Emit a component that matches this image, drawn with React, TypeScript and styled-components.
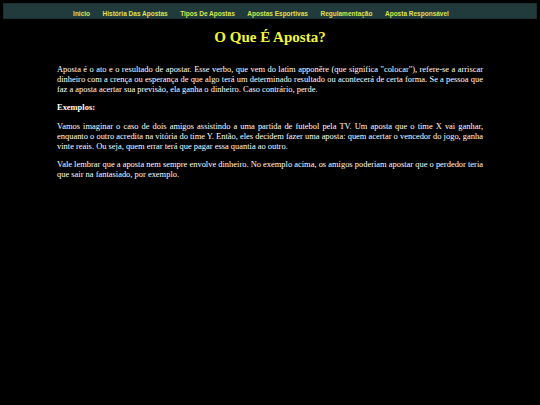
import styled, { createGlobalStyle } from 'styled-components';

const GlobalStyle = createGlobalStyle`
  html, body {
    margin: 0;
    padding: 0;
    background-color: #000;
  }
`;

const Page = styled.div`
  min-height: 405px;
  background-color: #000;
  color: #fff;
  padding-top: 3px;
`;

const Nav = styled.nav`
  margin: 0 3px;
  height: 16px;
  background-color: #213b3d;
  border: 1px solid #1a2e30;
  box-sizing: border-box;
  display: flex;
  align-items: center;
  justify-content: center;
  padding-right: 18px;
`;

const NavList = styled.ul`
  list-style: none;
  margin: 0;
  padding: 0;
  display: flex;
  gap: 12.5px;
`;

const NavLink = styled.a`
  font-family: 'Liberation Sans', Arial, sans-serif;
  font-size: 6.5px;
  font-weight: bold;
  color: #dde44b;
  text-decoration: none;
`;

const Main = styled.main`
  padding: 0 57px;
  font-family: 'Liberation Serif', 'Times New Roman', serif;
  font-size: 8.45px;
  line-height: normal;

  h1 {
    color: #f4f43a;
    font-size: 15px;
    font-weight: bold;
    text-align: center;
    margin: 9px 0 18px;
    line-height: 18px;
  }

  p {
    text-align: justify;
    margin: 1em 0;
  }

  h2 {
    font-size: 1em;
    font-weight: bold;
    margin: 1em 0;
  }
`;

const links = [
  'Inicio',
  'História Das Apostas',
  'Tipos De Apostas',
  'Apostas Esportivas',
  'Regulamentação',
  'Aposta Responsável',
];

export default function App() {
  return (
    <Page>
      <GlobalStyle />
      <Nav>
        <NavList>
          {links.map((l) => (
            <li key={l}>
              <NavLink href='#'>{l}</NavLink>
            </li>
          ))}
        </NavList>
      </Nav>

      <Main>
        <h1>O Que É Aposta?</h1>
        <p>
          Aposta é o ato e o resultado de apostar. Esse verbo, que vem do latim apponěre (que
          significa "colocar"), refere-se a arriscar dinheiro com a crença ou esperança de que algo
          terá um determinado resultado ou acontecerá de certa forma. Se a pessoa que faz a aposta
          acertar sua previsão, ela ganha o dinheiro. Caso contrário, perde.
        </p>
        <h2>Exemplos:</h2>
        <p>
          Vamos imaginar o caso de dois amigos assistindo a uma partida de futebol pela TV. Um
          aposta que o time X vai ganhar, enquanto o outro acredita na vitória do time Y. Então,
          eles decidem fazer uma aposta: quem acertar o vencedor do jogo, ganha vinte reais. Ou
          seja, quem errar terá que pagar essa quantia ao outro.
        </p>
        <p>
          Vale lembrar que a aposta nem sempre envolve dinheiro. No exemplo acima, os amigos
          poderiam apostar que o perdedor teria que sair na fantasiado, por exemplo.
        </p>
      </Main>
    </Page>
  );
}
